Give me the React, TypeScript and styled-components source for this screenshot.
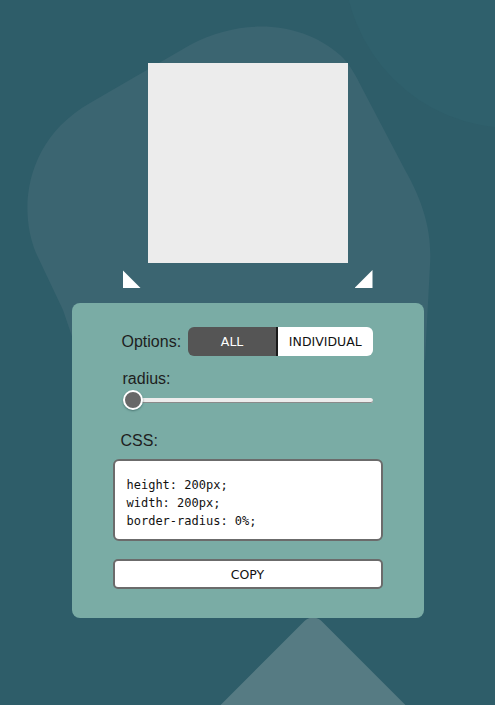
import { useState } from "react";
import styled, { createGlobalStyle } from "styled-components";

const GlobalStyle = createGlobalStyle`
  html, body {
    margin: 0;
    padding: 0;
    background: #2e5d69;
  }
  body {
    font-family: "Liberation Sans", Arial, sans-serif;
  }
`;

const Page = styled.div`
  position: relative;
  width: 495px;
  height: 705px;
  overflow: hidden;
  display: flex;
  flex-direction: column;
  align-items: center;
  padding-top: 63px;
  box-sizing: border-box;
`;

const Backdrop = styled.svg`
  position: absolute;
  inset: 0;
  z-index: 0;
`;

const Layer = styled.div`
  position: relative;
  z-index: 1;
  display: flex;
  flex-direction: column;
  align-items: center;
`;

const Preview = styled.div<{ $radius: number }>`
  width: 200px;
  height: 200px;
  background: #ececec;
  border-radius: ${(p) => p.$radius}%;
`;

const HandleRow = styled.div`
  width: 250px;
  margin-top: 7px;
  display: flex;
  justify-content: space-between;
`;

const Handle = styled.div<{ $side: "left" | "right" }>`
  width: 18px;
  height: 18px;
  background: #fff;
  clip-path: ${(p) =>
    p.$side === "left"
      ? "polygon(0 0, 100% 100%, 0 100%)"
      : "polygon(100% 0, 100% 100%, 0 100%)"};
`;

const Panel = styled.div`
  margin-top: 15px;
  width: 352px;
  box-sizing: border-box;
  padding: 24px 41px 29px;
  background: #7aaca5;
  border-radius: 8px;
  display: flex;
  flex-direction: column;
`;

const OptionsRow = styled.div`
  display: flex;
  align-items: center;
  padding: 0 10px 0 9px;
  gap: 7px;
`;

const Label = styled.span<{ $indent?: number }>`
  font-size: 16px;
  color: #1e1e1e;
  padding-left: ${(p) => p.$indent ?? 0}px;
`;

const Toggle = styled.div`
  flex: 1;
  height: 29px;
  display: flex;
  border-radius: 6px;
  overflow: hidden;
`;

const ToggleButton = styled.button<{ $active: boolean }>`
  flex: ${(p) => (p.$active ? "0 0 90px" : "1")};
  border: none;
  margin: 0;
  padding: 0;
  font-family: "DejaVu Sans", sans-serif;
  font-size: 12.5px;
  background: ${(p) => (p.$active ? "#555555" : "#ffffff")};
  color: ${(p) => (p.$active ? "#ffffff" : "#111111")};
  border-right: ${(p) => (p.$active ? "2px solid #1a1a1a" : "none")};
  cursor: pointer;
`;

const RadiusBlock = styled.div`
  display: flex;
  flex-direction: column;
  padding: 0 10px;
  margin-top: 14px;
`;

const Slider = styled.input`
  appearance: none;
  -webkit-appearance: none;
  width: 250px;
  margin: 1px 0 0;
  height: 22px;
  background: transparent;

  &::-webkit-slider-runnable-track {
    height: 5px;
    background: #ececec;
    border-radius: 3px;
    box-shadow: inset 0 -1px 0 #8a8a8a;
  }
  &::-webkit-slider-thumb {
    -webkit-appearance: none;
    width: 20px;
    height: 20px;
    margin-top: -8px;
    border-radius: 50%;
    background: #686868;
    border: 2px solid #fff;
    box-sizing: border-box;
    box-shadow: 0 1px 2px rgba(40, 80, 80, 0.6);
  }
`;

const CssLabel = styled(Label)`
  margin-top: 21px;
  padding-left: 8px;
`;

const CodeBox = styled.pre`
  margin: 9px 0 0;
  height: 82px;
  box-sizing: border-box;
  padding: 15px 12px;
  background: #fff;
  border: 2px solid #6b6b6b;
  border-radius: 6px;
  font-family: "DejaVu Sans Mono", monospace;
  font-size: 12px;
  line-height: 18px;
  color: #111;
`;

const CopyButton = styled.button`
  margin-top: 18px;
  height: 30px;
  background: #fff;
  border: 2px solid #6b6b6b;
  border-radius: 5px;
  font-family: "DejaVu Sans", sans-serif;
  font-size: 12.5px;
  color: #111;
  cursor: pointer;
`;

export default function App() {
  const [mode, setMode] = useState<"all" | "individual">("all");
  const [radius, setRadius] = useState(0);

  const css = `height: 200px;\nwidth: 200px;\nborder-radius: ${radius}%;`;

  return (
    <>
      <GlobalStyle />
      <Page>
        <Backdrop width="495" height="705" viewBox="0 0 495 705">
          <circle cx="512" cy="-40" r="168" fill="#2f606c" />
          <path
            d="M 63 310 L 36 253 C 18 210 25 140 90 103 L 190 45 C 240 18 300 20 340 55 C 350 64 356 76 362 88 L 405 170 C 425 205 432 235 430 265 L 425 360 L 80 360 Z"
            fill="#3b6571"
          />
          <rect
            x="213"
            y="654"
            width="200"
            height="200"
            rx="12"
            fill="#567b83"
            transform="rotate(45 313 754)"
          />
        </Backdrop>
        <Layer>
          <Preview $radius={radius} />
          <HandleRow>
            <Handle $side="left" />
            <Handle $side="right" />
          </HandleRow>
          <Panel>
            <OptionsRow>
              <Label>Options:</Label>
              <Toggle>
                <ToggleButton $active={mode === "all"} onClick={() => setMode("all")}>
                  ALL
                </ToggleButton>
                <ToggleButton
                  $active={mode === "individual"}
                  onClick={() => setMode("individual")}
                >
                  INDIVIDUAL
                </ToggleButton>
              </Toggle>
            </OptionsRow>
            <RadiusBlock>
              <Label>radius:</Label>
              <Slider
                type="range"
                min={0}
                max={50}
                value={radius}
                onChange={(e) => setRadius(Number(e.target.value))}
              />
            </RadiusBlock>
            <CssLabel>CSS:</CssLabel>
            <CodeBox>{css}</CodeBox>
            <CopyButton onClick={() => navigator.clipboard?.writeText(css)}>COPY</CopyButton>
          </Panel>
        </Layer>
      </Page>
    </>
  );
}
